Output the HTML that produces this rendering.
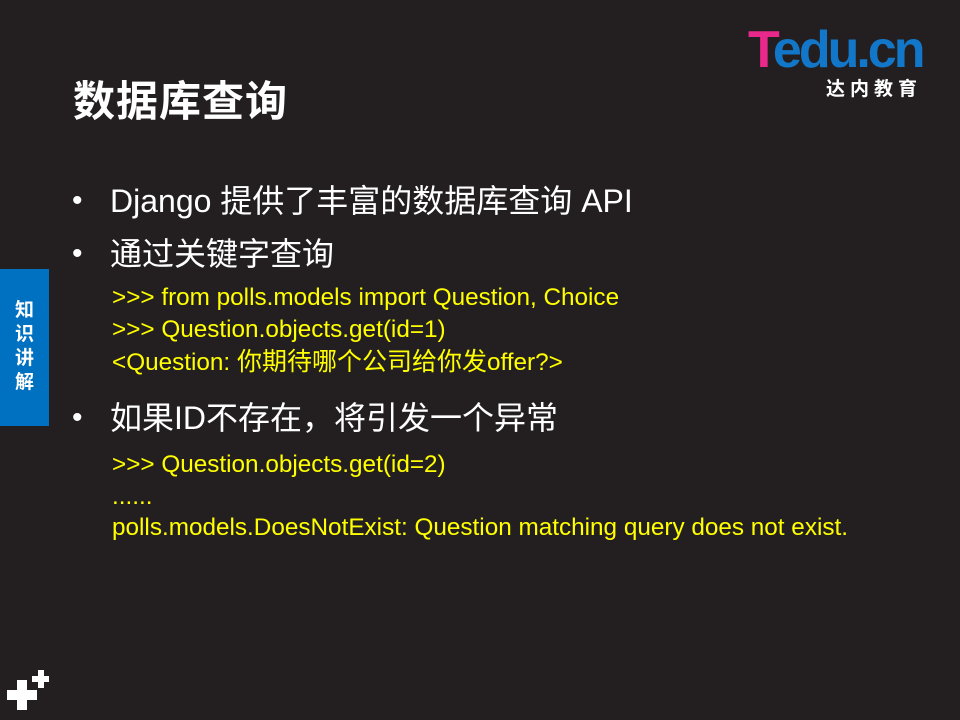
<!DOCTYPE html>
<html><head><meta charset="utf-8"><style>
body{margin:0;width:960px;height:720px;background:#231f20;position:relative;overflow:hidden;font-family:"Liberation Sans","Noto Sans CJK SC",sans-serif;}
.a{position:absolute;white-space:nowrap;}
.t{left:73px;top:68px;font-size:42px;font-weight:bold;color:#fff;letter-spacing:1px;}
.b{left:110px;font-size:32px;color:#fff;line-height:36px;}
.d{left:72px;font-size:30px;color:#fff;line-height:36px;}
.c{left:112px;font-size:24.3px;color:#ffff00;line-height:28px;}
.tab{left:0;top:269px;width:49px;height:157px;background:#0070c0;color:#fff;font-weight:bold;font-size:19px;line-height:24px;text-align:center;}
</style></head><body>
<div class="a" style="left:748px;top:22px;font-size:52px;font-weight:bold;letter-spacing:-3px;line-height:56px;"><span style="color:#e8288a">T</span><span style="color:#1277c8">edu.cn</span></div>
<div class="a" style="left:826px;top:74px;font-size:19px;color:#fff;letter-spacing:5px;font-weight:bold;">达内教育</div>
<div class="a t">数据库查询</div>
<div class="a d" style="top:183px">•</div><div class="a b" style="top:183px">Django 提供了丰富的数据库查询 API</div>
<div class="a d" style="top:236px">•</div><div class="a b" style="top:236px">通过关键字查询</div>
<div class="a c" style="top:284px">&gt;&gt;&gt; from polls.models import Question, Choice</div>
<div class="a c" style="top:316px">&gt;&gt;&gt; Question.objects.get(id=1)</div>
<div class="a c" style="top:348px">&lt;Question: <span style="font-size:25px">你期待哪个公司给你发</span>offer?&gt;</div>
<div class="a d" style="top:400px">•</div><div class="a b" style="top:400px">如果ID不存在，将引发一个异常</div>
<div class="a c" style="top:451px">&gt;&gt;&gt; Question.objects.get(id=2)</div>
<div class="a c" style="top:483px">......</div>
<div class="a c" style="top:514px">polls.models.DoesNotExist: Question matching query does not exist.</div>
<div class="a tab"><div style="padding-top:30px">知<br>识<br>讲<br>解</div></div>
<div class="a" style="left:7px;top:690px;width:30px;height:10px;background:#fff"></div>
<div class="a" style="left:17px;top:680px;width:10px;height:30px;background:#fff"></div>
<div class="a" style="left:32px;top:676px;width:17px;height:6px;background:#fff"></div>
<div class="a" style="left:38px;top:670px;width:6px;height:18px;background:#fff"></div>
</body></html>
